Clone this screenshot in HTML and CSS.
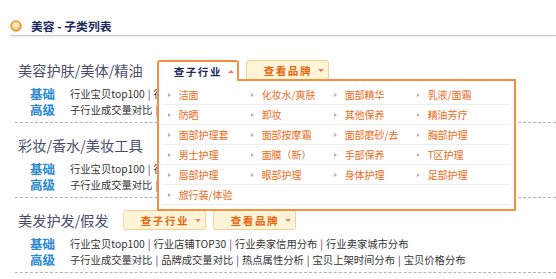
FILE: index.html
```html
<!DOCTYPE html>
<html lang="zh-CN">
<head>
<meta charset="utf-8">
<title>美容 - 子类列表</title>
<link rel="stylesheet" href="styles.css">
</head>
<body>
<div class="header">
  <svg class="dot" width="12" height="12" viewBox="0 0 12 12"><defs><radialGradient id="g" cx="0.45" cy="0.4" r="0.6"><stop offset="0" stop-color="#fff6df"/><stop offset="0.55" stop-color="#fbd89a"/><stop offset="1" stop-color="#f3a03a"/></radialGradient></defs><circle cx="6" cy="6" r="5" fill="url(#g)" stroke="#f29a33" stroke-width="1.6"/></svg>
  <span class="header-title">美容 - 子类列表</span>
</div>
<div class="list">
  <div class="cat">
    <div class="cat-head">
      <span class="cat-name">美容护肤/美体/精油</span>
      <div class="btns">
        <span class="btn btn-active">查子行业<i class="arr arr-up"></i></span>
        <span class="btn">查看品牌<i class="arr"></i></span>
        <div class="dropdown">
          <div class="dd-row"><span class="dd-item">洁面</span><span class="dd-item">化妆水/爽肤</span><span class="dd-item">面部精华</span><span class="dd-item">乳液/面霜</span></div>
          <div class="dd-row"><span class="dd-item">防晒</span><span class="dd-item">卸妆</span><span class="dd-item">其他保养</span><span class="dd-item">精油芳疗</span></div>
          <div class="dd-row"><span class="dd-item">面部护理套</span><span class="dd-item">面部按摩霜</span><span class="dd-item">面部磨砂/去</span><span class="dd-item">胸部护理</span></div>
          <div class="dd-row"><span class="dd-item">男士护理</span><span class="dd-item">面膜（新）</span><span class="dd-item">手部保养</span><span class="dd-item">T区护理</span></div>
          <div class="dd-row"><span class="dd-item">唇部护理</span><span class="dd-item">眼部护理</span><span class="dd-item">身体护理</span><span class="dd-item">足部护理</span></div>
          <div class="dd-row"><span class="dd-item">旅行装/体验</span></div>
        </div>
      </div>
    </div>
    <div class="links">
      <div class="link-row"><span class="lvl">基础</span><span class="items">行业宝贝top100<span class="sep">|</span>行业店铺TOP30<span class="sep">|</span>行业卖家信用分布<span class="sep">|</span>行业卖家城市分布</span></div>
      <div class="link-row"><span class="lvl">高级</span><span class="items">子行业成交量对比<span class="sep">|</span>品牌成交量对比<span class="sep">|</span>热点属性分析<span class="sep">|</span>宝贝上架时间分布<span class="sep">|</span>宝贝价格分布</span></div>
    </div>
  </div>
  <div class="cat">
    <div class="cat-head">
      <span class="cat-name">彩妆/香水/美妆工具</span>
      <div class="btns">
        <span class="btn">查子行业<i class="arr"></i></span>
        <span class="btn">查看品牌<i class="arr"></i></span>
      </div>
    </div>
    <div class="links">
      <div class="link-row"><span class="lvl">基础</span><span class="items">行业宝贝top100<span class="sep">|</span>行业店铺TOP30<span class="sep">|</span>行业卖家信用分布<span class="sep">|</span>行业卖家城市分布</span></div>
      <div class="link-row"><span class="lvl">高级</span><span class="items">子行业成交量对比<span class="sep">|</span>品牌成交量对比<span class="sep">|</span>热点属性分析<span class="sep">|</span>宝贝上架时间分布<span class="sep">|</span>宝贝价格分布</span></div>
    </div>
  </div>
  <div class="cat">
    <div class="cat-head">
      <span class="cat-name">美发护发/假发</span>
      <div class="btns">
        <span class="btn">查子行业<i class="arr"></i></span>
        <span class="btn">查看品牌<i class="arr"></i></span>
      </div>
    </div>
    <div class="links">
      <div class="link-row"><span class="lvl">基础</span><span class="items">行业宝贝top100<span class="sep">|</span>行业店铺TOP30<span class="sep">|</span>行业卖家信用分布<span class="sep">|</span>行业卖家城市分布</span></div>
      <div class="link-row"><span class="lvl">高级</span><span class="items">子行业成交量对比<span class="sep">|</span>品牌成交量对比<span class="sep">|</span>热点属性分析<span class="sep">|</span>宝贝上架时间分布<span class="sep">|</span>宝贝价格分布</span></div>
    </div>
  </div>
</div>
</body>
</html>
```
FILE: styles.css
```css
html, body {
  margin: 0;
  padding: 0;
  background: #ffffff;
}
body {
  width: 556px;
  height: 279px;
  overflow: hidden;
  font-family: "Noto Sans CJK SC", "Microsoft YaHei", sans-serif;
  color: #333333;
}
.header {
  margin: 16px 0 0 10px;
  height: 19px;
  display: flex;
  align-items: center;
  gap: 9px;
  border-bottom: 1px solid #c8c8c8;
  box-shadow: 0 2px 2px -1px #ececec;
}
.dot {
  display: block;
  flex: none;
}
.header-title {
  font-size: 11.8px;
  font-weight: bold;
  color: #1c2a5c;
  white-space: pre;
}
.list {
  margin-top: 12px;
}
.cat {
  margin-left: 15px;
  padding: 12px 0 5px;
  border-bottom: 1px dashed #b3b3b3;
}
.cat-head {
  height: 20px;
  display: flex;
  align-items: center;
  padding-left: 3px;
  gap: 14px;
}
.cat-name {
  font-size: 14.2px;
  color: #4a4d6c;
  white-space: nowrap;
  line-height: 20px;
}
.btns {
  position: relative;
  display: flex;
  align-items: flex-start;
  gap: 7px;
  height: 20px;
}
.btn {
  box-sizing: border-box;
  width: 83px;
  height: 20px;
  display: flex;
  align-items: center;
  padding-left: 17px;
  border: 1px solid #f8cf94;
  border-radius: 3px;
  background: #fff3d8;
  color: #e8660e;
  font-size: 10.5px;
  font-weight: bold;
  letter-spacing: 1.6px;
  white-space: nowrap;
}
.btn-active {
  position: relative;
  z-index: 6;
  width: 82px;
  height: 21px;
  padding-left: 15px;
  border: 2px solid #f3903e;
  border-bottom: none;
  border-radius: 3px 3px 0 0;
  background: #ffffff;
  color: #1d2a5e;
  padding-bottom: 1px;
}
.arr {
  width: 0;
  height: 0;
  margin-left: 6px;
  border-left: 3px solid transparent;
  border-right: 3px solid transparent;
  border-top: 3px solid #e88350;
}
.arr-up {
  border-top: none;
  border-bottom: 3px solid #f08040;
}
.dropdown {
  position: absolute;
  z-index: 5;
  left: 0;
  top: 19px;
  box-sizing: border-box;
  width: 359px;
  padding: 4px 4px 4px 4px;
  border: 2px solid #f3903e;
  background: #ffffff;
}
.dd-row {
  display: flex;
  height: 19px;
  border-bottom: 1px solid #eeeeee;
  align-items: center;
}
.dd-item {
  box-sizing: border-box;
  width: 83px;
  flex: none;
  display: flex;
  align-items: center;
  padding-left: 5px;
  font-size: 10px;
  color: #ef6c1a;
  white-space: nowrap;
}
.dd-item::before {
  content: "";
  width: 0;
  height: 0;
  margin-right: 8px;
  border-top: 2px solid transparent;
  border-bottom: 2px solid transparent;
  border-left: 3px solid #b5b5b5;
}
.links {
  margin-top: 5px;
}
.link-row {
  display: flex;
  align-items: center;
  height: 16px;
  white-space: nowrap;
}
.lvl {
  margin-left: 15px;
  width: 40px;
  flex: none;
  font-size: 12.5px;
  font-weight: bold;
  color: #2b88d2;
}
.items {
  font-size: 10.3px;
  color: #333333;
}
.sep {
  margin: 0 3px;
  color: #6b2f7e;
}
```
